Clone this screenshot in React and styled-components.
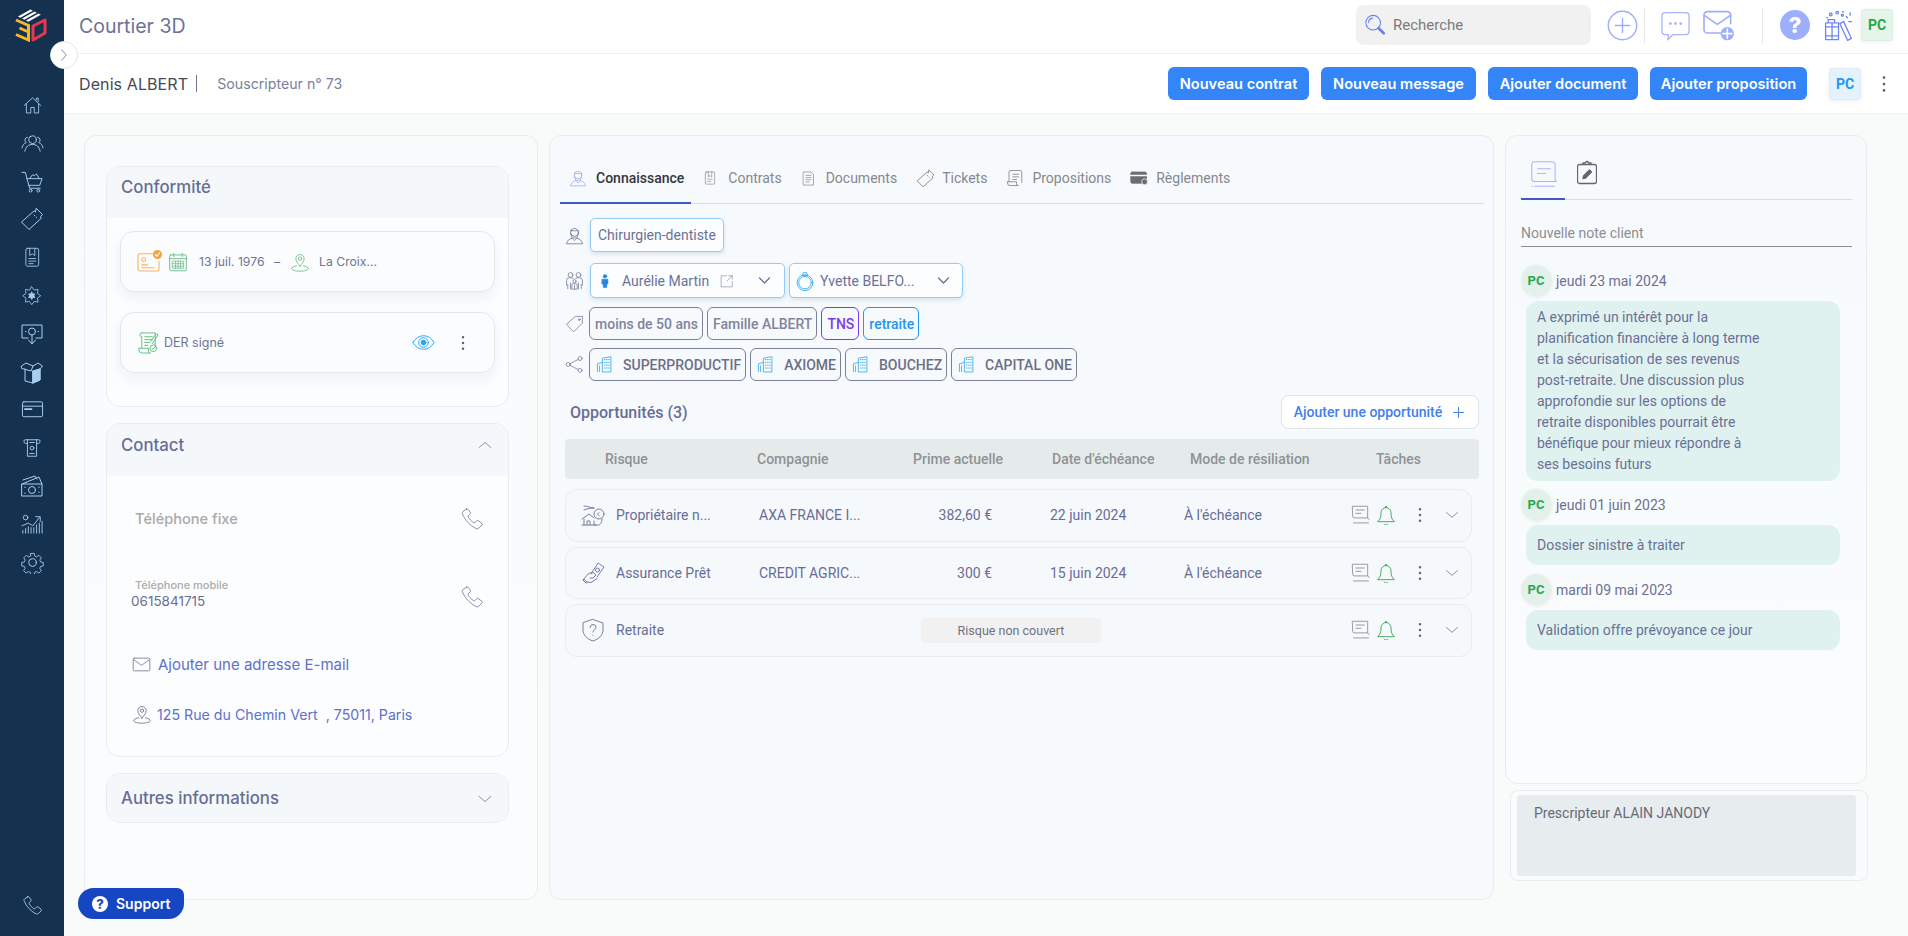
import React from 'react';
import styled, { createGlobalStyle } from 'styled-components';

const POP = `Inter, "Noto Sans", sans-serif`;
const ROB = `Roboto, "Liberation Sans", sans-serif`;
const INK = '#6b7096';

const Global = createGlobalStyle`
  html, body { margin: 0; padding: 0; height: 100%; background: #f9fafa; }
  #root { height: 936px; }
  * { box-sizing: border-box; }
`;

/* ---------- icon primitive ---------- */
const Ico = styled.svg.attrs(p => ({
  viewBox: p.$vb || '0 0 24 24', fill: 'none', stroke: 'currentColor', strokeLinecap: 'round', strokeLinejoin: 'round',
}))`
  width: ${p => p.$s || 20}px;
  height: ${p => p.$h || p.$s || 20}px;
  flex: none;
  color: ${p => p.$c || INK};
  stroke-width: ${p => p.$w ?? 1};
  margin-left: ${p => p.$ml || 0}px;
  margin-right: ${p => p.$mr || 0}px;
  margin-top: ${p => p.$mt || 0}px;
`;

const star = (n, R, r) => Array.from({ length: n * 2 }, (_, i) => {
  const a = (Math.PI * i) / n - Math.PI / 2;
  const d = i % 2 ? r : R;
  return `${(12 + d * Math.cos(a)).toFixed(2)},${(12 + d * Math.sin(a)).toFixed(2)}`;
}).join(' ');

const I = {
  home: <><path d="M2.500 12 12 3.200l9.500 8.800" /><path d="M5 10v10.500h5v-6.200h4v6.200h5V10" /><path d="M16.500 5.500V3.500h2v4" /></>,
  users: <><circle cx="12" cy="8" r="4" /><path d="M4 20c1-5 4-7 8-7s7 2 8 7" /><path d="M6.500 5.500a3 3 0 0 0-1 5.500C3 12 1.500 14 1 16.500" /><path d="M17.500 5.500a3 3 0 0 1 1 5.500c2.500 1 4 3 4.500 5.500" /></>,
  cart: <><path d="M1 2.500h3.500L9 19h11" /><path d="M6 9h16l-2.500 7H8" /><path d="M9 9l3-4 2 1 2-2 3 5" /><circle cx="10" cy="21.500" r="1.500" /><circle cx="18" cy="21.500" r="1.500" /></>,
  ticket: <><path d="M16.500 1.500 22.500 7.500l-2.300 2.300 1.300 1.200L9 22.500 1.500 15 14.200 3.800l1 1z" /><path d="M14 8l.6.6M16 10l.6.6" /></>,
  contract: <><rect x="4.500" y="1.500" width="15" height="21" rx="2" /><path d="M9 1.500V10l3-2 3 2V1.500" /><path d="M8 13.500h8M8 16.500h8M8 19.500h5" /></>,
  burst: <><polygon points={star(8, 11, 7.6)} /><polygon points={star(6, 4.500, 2.600)} fill="currentColor" /></>,
  moneyDown: <><path d="M8 16H2V3h20v13h-6" /><circle cx="12" cy="9.500" r="3.500" /><path d="M5.500 9.500h.5M18 9.500h.5" /><path d="M12 13v8M8.500 18l3.500 4 3.500-4" /></>,
  box: <><path d="M5 9v12l8 2 7-3V9" /><path d="M13 11v12" /><path d="M13 23l7-3V9l-7 2z" fill="currentColor" /><path d="M1.500 6 6 3l7 3-2 5-9-2.500z" /><path d="M13 6l5-3 4.500 3-2.500 3-7 2" /></>,
  card: <><rect x="1.500" y="4" width="21" height="15.500" rx="1.500" /><path d="M1.500 8.500h21" /><path d="M4 11.500h7" strokeWidth="1.800" /></>,
  atm: <><path d="M7 7H5C3 7 2.500 3 4.500 3h15c2 0 1.500 4-.5 4h-2" /><path d="M7 3v18h10V3" /><circle cx="12" cy="12" r="2" /><path d="M9.500 18h5M9.500 6h5" /></>,
  cash: <><path d="M2 10 19 3l3 7" /><path d="M3 6l12-4 2 3" /><rect x="2" y="10" width="20" height="12" /><circle cx="12" cy="16" r="3.500" /><path d="M5 13v.5M19 18v.5M5 19v.5M19 13v.5" /></>,
  chart: <><circle cx="5" cy="5" r="2.500" /><path d="M1 14l7-3 5 3 7-9M16 4h5v5" /><path d="M2 22v-3M5 22v-5M8 22v-7M11 22v-6M14 22v-6M17 22v-9M20 22v-11M23 22v-13" /></>,
  gear: <><path d="M10 1.500h4l.6 3.100 2.200.9 2.600-1.800 2.900 2.900-1.800 2.600.9 2.200 3.100.6v4l-3.100.6-.9 2.200 1.800 2.600-2.900 2.900-2.600-1.800-2.200.9-.6 3.100h-4l-.6-3.100-2.200-.9-2.600 1.800-2.900-2.900 1.800-2.600-.9-2.200-3.100-.6v-4l3.100-.6.9-2.200L1.900 6.600l2.900-2.900 2.600 1.800 2.200-.9z" transform="translate(1.200 1.200) scale(.9)" /><circle cx="12" cy="12" r="4" /></>,
  phone: <><path d="M6.500 2 3 4.500C2.300 5 2 6 2.500 7c2.500 6 7.500 11.500 13.500 14.500 1 .5 2 .3 2.800-.4L22 18c.5-.5.4-1.200-.1-1.600l-3.600-2.800c-.5-.4-1.200-.3-1.600.1L15 15.500c-.4.400-1 .4-1.500.1-1.800-1.100-4.200-3.600-5.300-5.500-.3-.5-.2-1.100.2-1.500l1.800-1.700c.4-.4.400-1 .1-1.500L8 2.300C7.600 1.800 7 1.700 6.500 2z" /></>,
  search: <><circle cx="10" cy="9.500" r="8" /><path d="M5 9.500A5 5 0 0 1 9.500 4.500" /><path d="M16 15.500l5.500 5.500" strokeWidth="3" /></>,
  plusCircle: <><circle cx="12" cy="12" r="11" /><path d="M12 6.500v11M6.500 12h11" /></>,
  chat: <><path d="M4 2h16a2.500 2.500 0 0 1 2.500 2.500v12A2.500 2.500 0 0 1 20 19H10l-4 4 .5-4H4a2.500 2.500 0 0 1-2.500-2.500v-12A2.500 2.500 0 0 1 4 2z" /><path d="M8 10.500h.01M12 10.500h.01M16 10.500h.01" strokeWidth="2.200" /></>,
  mailPlus: <><path d="M14 18H4a2.500 2.500 0 0 1-2.500-2.500v-11A2.500 2.500 0 0 1 4 2h15a2.500 2.500 0 0 1 2.500 2.500V11" /><path d="M2 5l9.500 6.500L21 5" /><circle cx="19" cy="18.500" r="5" fill="currentColor" stroke="none" /><path d="M19 15v7M15.500 18.500h7" stroke="#fff" /></>,
  books: <><path d="M2 10h5v13H2zM7 10h5v13H7zM2 13h10M2 20h10" /><path d="M13 10.500l3-1.500 6 13-3 1.500z" /><path d="M4 9.500V7.500h5v2" /><circle cx="6" cy="3.500" r="1" /><circle cx="11" cy="2" r="1" /><circle cx="15" cy="4" r=".8" /><path d="M18 5l1 1M21 2v2M20 9h2M15 1.500h1M3 6h.5" /></>,
  dots: <><path d="M12 5h.01M12 12h.01M12 19h.01" strokeWidth="3" /></>,
  eye: <><path d="M1 12c2.500-4.500 6.500-7 11-7s8.500 2.500 11 7c-2.500 4.500-6.500 7-11 7s-8.500-2.500-11-7z" /><circle cx="12" cy="12" r="5" /><circle cx="12" cy="12" r="2.500" fill="currentColor" /></>,
  idCard: <><path d="M17 4H3a2 2 0 0 0-2 2v14a2 2 0 0 0 2 2h18a2 2 0 0 0 2-2v-8" /><circle cx="7" cy="10" r="2" /><path d="M5 15.500h6M5 18.500h13" /></>,
  calendar: <><rect x="2" y="3.500" width="20" height="19" rx="1.500" /><path d="M2 8h20M7 1.500v4M17 1.500v4" /><path d="M5.500 11h13v8.500h-13zM5.500 14h13M5.500 17h13M9 11v8.500M12 11v8.500M15 11v8.500" strokeWidth=".8" /></>,
  pin: <><path d="M12 17c-2.500-3-5-6-5-9a5 5 0 0 1 10 0c0 3-2.500 6-5 9z" /><circle cx="12" cy="8" r="2" /><path d="M8 16.500c-3.500.6-6 2-6 3.500 0 1.700 4.500 3 10 3s10-1.300 10-3c0-1.500-2.500-2.900-6-3.500" /></>,
  scroll: <><path d="M5 2h14v14M5 2a2 2 0 0 0 0 4v12" /><path d="M8 6h8M8 9h8M8 12h5M8 15h3" /><path d="M2 18h10v3a2 2 0 0 0 2 2H5a3 3 0 0 1-3-3z" /><circle cx="17" cy="18" r="3.500" /><path d="M15.500 18l1 1 2-2M14 11l6-8 2 1-6 9" /></>,
  mail: <><rect x="1.500" y="4" width="21" height="16" rx="1.500" /><path d="M2 6l10 7 10-7" /></>,
  chevDown: <path d="M4 8.500l8 7 8-7" />,
  chevUp: <path d="M4 15.500l8-7 8 7" />,
  chevRight: <path d="M8 3l8 9-8 9" />,
  chevBold: <path d="M5 8.500l7 7 7-7" />,
  agent: <><circle cx="12" cy="8" r="5" /><path d="M7 6c3 0 7 0 10 0M7 9l2 6h6l2-6" /><path d="M2 22c.5-3.500 3-5.500 7-6.500l3 3 3-3c4 1 6.500 3 7 6.500z" /></>,
  contrats: <><rect x="4" y="1.500" width="16" height="21" rx="2" /><path d="M9 1.500V10l3-2 3 2V1.500M8 14h8M8 18h5" /></>,
  doc: <><path d="M4 1.500h12l4 4v17H4z" /><path d="M8 7h8M8 10.500h8M8 14h8M8 17.500h5" /></>,
  propos: <><path d="M6 2h13a2 2 0 0 1 2 2v14" /><path d="M6 2a2 2 0 0 0-2 2v13" /><path d="M9 7h8M9 10.500h8M9 14h5" /><path d="M2 17h12v2.500a2.500 2.500 0 0 0 2.500 2.500H5a3 3 0 0 1-3-3z" /></>,
  regle: <><rect x="1" y="4" width="21" height="15" rx="2" fill="currentColor" /><path d="M1 8.500h21" stroke="#f6f9fb" strokeWidth="2" /><circle cx="19.500" cy="17" r="4" fill="currentColor" stroke="#f6f9fb" /></>,
  family: <><circle cx="7" cy="5" r="3" /><circle cx="17" cy="5" r="3" /><circle cx="12" cy="13" r="2" /><path d="M2 18v-6a3.500 3.500 0 0 1 3.500-3.500h3A3.500 3.500 0 0 1 11 10M22 18v-6a3.500 3.500 0 0 0-3.500-3.500h-3A3.500 3.500 0 0 0 13 10M3.500 22.500V17M7 22.500V15M20.500 22.500V17M17 22.500V15M8.500 22.500V18a2 2 0 0 1 2-2h3a2 2 0 0 1 2 2v4.500zM12 18v4.500" /></>,
  tag: <><path d="M13.500 3H22v8.500L11 22.500 2 13.500z" /><circle cx="18" cy="7" r="1.200" /></>,
  share: <><circle cx="4" cy="12" r="2.500" /><circle cx="19" cy="4.500" r="2.500" /><circle cx="19" cy="19.500" r="2.500" /><path d="M6.300 11 16.700 5.600M6.300 13l10.400 5.400" /></>,
  building: <><path d="M9 22V3l12-2v21z" /><path d="M2 22v-11l7-2" /><path d="M12 5h.6M15 5h.6M18 5h.6M12 9h.6M15 9h.6M18 9h.6M12 13h.6M15 13h.6M18 13h.6M12 17h.6M15 17h.6M18 17h.6" strokeWidth="1.400" /><path d="M5 14v8" /></>,
  external: <><path d="M11 3H2v19h19v-9" /><path d="M21 3 12 12M15 3h6v6" /></>,
  person: <><circle cx="12" cy="4" r="3" fill="currentColor" /><path d="M7 9h10v8h-2v6h-6v-6H7z" fill="currentColor" /></>,
  ring: <><circle cx="12" cy="14" r="9.500" /><circle cx="12" cy="14" r="7.500" /><path d="M9 5l1-3h4l1 3z" /></>,
  plus: <path d="M12 4v16M4 12h16" />,
  house: <><circle cx="18" cy="11" r="5" /><path d="M18 9.500l-1.500 1.500 1.500 1.500" /><path d="M1 22h14M3 22v-6M13 22v-4M1 16l7-5 5 4M6 22v-4h3v4" /><path d="M3 3c4 0 6 2 10 2M3 7c3-1 5-2 10-2" /><path d="M14 22h3c2 0 4-2 4-6" /></>,
  handCash: <><path d="M10 13 17 2l6 4-7 10" /><circle cx="16.500" cy="9" r="2" /><path d="M2 19l5-6c2-1.500 4-1.500 6-1l2 2-3 3h-3M5 22l-3-3 1-1 3 3z" /><path d="M6 21l4 .5 6-4" /></>,
  shieldQ: <><path d="M12 1.500l10 3.500v7c0 5-4 9-10 11C6 21 2 17 2 12V5z" /><path d="M9 9.500a3 3 0 0 1 6 0c0 2-3 2.500-3 4.500M12 17.500h.01" /></>,
  comment: <><path d="M2 1.500h18v14H4a2 2 0 0 1-2-2zM20 15.500l2 2" /><path d="M6 6h10M6 10h6M3 21.500h18" /></>,
  bell: <><path d="M12 3a6 6 0 0 1 6 6c0 6 1 8 4 11H2c3-3 4-5 4-11a6 6 0 0 1 6-6z" /><path d="M10 23a2.200 2.200 0 0 0 4 0M11 2.500a1 1 0 0 1 2 0" /></>,
  note: <><path d="M4 1.500h15a2.500 2.500 0 0 1 2.500 2.500v13l1 1.500H4a2.500 2.500 0 0 1-2.500-2.500V4A2.500 2.500 0 0 1 4 1.500z" /><path d="M6.500 7.500h11M6.500 11.500h7M4 22.500h17M1.500 22.500h.5" /></>,
  clip: <><rect x="2.500" y="4" width="19" height="19" rx="2" /><path d="M8 4V2.500h2.500a1.500 1.500 0 0 1 3 0H16V4" /><path d="M8 18l2.500-.5 6-6-2-2-6 6z" fill="currentColor" /></>,
  check: <path d="M2.500 5.200 4.200 7 7.500 3.200" />,
};

/* ---------- shell ---------- */
const Page = styled.div`
  display: flex; height: 936px; overflow: hidden; position: relative;
  font-family: ${POP}; color: ${INK}; background: #f9fafa;
`;
const Side = styled.aside`
  width: 64px; flex: none; background: #14324f; display: flex; flex-direction: column; align-items: center;
  padding-bottom: 20px;
`;
const Logo = styled.svg`width: 32px; height: 36px; margin-top: 7px; flex: none; margin-left: -2px;`;
const SideNav = styled.nav`
  display: flex; flex-direction: column; align-items: center; margin-top: 43px; flex: 1;
`;
const SideItem = styled.div`
  height: 38.100px; display: flex; align-items: center; justify-content: center;
`;
const Toggle = styled.button`
  position: absolute; left: 50px; top: 41px; width: 28px; height: 28px; border-radius: 50%;
  background: #fff; border: 1px solid #e4e6ea; padding: 0; display: flex; align-items: center; justify-content: center;
`;
const Main = styled.div`flex: 1; min-width: 0; display: flex; flex-direction: column;`;
const TopBar = styled.header`
  height: 54px; flex: none; background: #fff; border-bottom: 1px solid #eef0f2; display: flex; align-items: center;
  padding: 0 15px 3px 15px;
`;
const AppTitle = styled.div`font-size: 19.500px; font-weight: 400; color: #69739a; margin-top: 1px;`;
const SearchBox = styled.div`
  margin-left: auto; margin-right: -1px; width: 235px; height: 40px; border-radius: 8px; background: #f1f1f1; display: flex; align-items: center; gap: 7px;
  padding-left: 8px; font-family: ${ROB}; font-size: 15px; color: #7b7b7b;
`;
const TopDivider = styled.span`width: 1px; height: 35px; background: #e6e7ea; flex: none;`;
const IconSlot = styled.div`display: flex; margin-left: ${p => p.$ml || 0}px; flex: none; align-items: center;`;
const Initials = styled.div`
  width: 32px; height: 32px; border-radius: 3px; flex: none; display: flex; align-items: center; justify-content: center;
  font-family: ${ROB}; font-weight: 700; font-size: 14px;
  background: ${p => (p.$blue ? '#e3f2fd' : '#e6f4ea')}; color: ${p => (p.$blue ? '#2196f3' : '#28a745')};
  border: 1px solid ${p => (p.$blue ? '#dcebf7' : '#dfeee4')}; box-shadow: 0 2px 5px rgba(0,0,0,.05);
  margin-left: ${p => p.$ml || 0}px;
`;
const ToolBar = styled.div`
  height: 60px; flex: none; background: #fff; border-bottom: 1px solid #f0f1f2; display: flex; align-items: center;
  padding: 0 13px 0 15px;
`;
const ClientName = styled.div`font-size: 16px; color: #444a55; font-weight: 400; letter-spacing: .1px;`;
const Bar = styled.span`width: 1px; height: 17px; background: #70769a; margin: 0 20px 0 8px;`;
const ClientRole = styled.div`font-size: 14.200px; color: #79809f;`;
const ActionGroup = styled.div`margin-left: auto; display: flex; align-items: center; gap: 12px; margin-right: 1px;`;
const ActionBtn = styled.button`
  height: 33px; border: 0; border-radius: 6px; background: #3385f8; color: #fff; font-family: ${POP}; font-weight: 600; font-size: 14.600px;
  width: ${p => p.$w}px; padding: 0; white-space: nowrap;
`;
const DotBtn = styled.div`display: flex; margin-left: 11px;`;

const Content = styled.main`
  flex: 1; min-height: 0; display: grid; grid-template-columns: 454px 945px 362px; gap: 11px;
  padding: 21px 0 36px 20px;
`;
const Panel = styled.section`
  border: 1px solid #e9edf0; border-radius: 12px; background: #f7fafc; min-height: 0;
`;

/* ---------- left column ---------- */
const LeftPanel = styled(Panel)`
  padding: 30px 28px 0 21px; display: flex; flex-direction: column; gap: 16px;
  background: linear-gradient(#f8fafc, #fafcfd);
`;
const Section = styled.div`
  border: 1px solid #e9edf0; border-radius: 14px; background: #fcfdfe; overflow: hidden; flex: none;
  height: ${p => p.$h}px;
`;
const SectionHead = styled.div`
  height: ${p => p.$h || 51}px; background: #f5f8fb; padding: ${p => p.$pt || 10}px 14px 0 14px; display: flex; justify-content: space-between; align-items: flex-start;
  font-size: 16.800px; font-weight: 500; color: #666e95;
`;
const SectionBody = styled.div`padding: 13px 13px; display: flex; flex-direction: column; gap: 20px;`;
const InfoCard = styled.div`
  height: 61px; border: 1px solid #e4e6ea; border-radius: 14px; background: #fbfcfe; box-shadow: 0 6px 14px rgba(30,40,60,.06);
  display: flex; align-items: center; padding: 0 16px; font-size: 12.200px; color: #6e7497;
`;
const InfoText = styled.span`margin-left: ${p => p.$ml || 0}px; white-space: nowrap; font-size: ${p => p.$fs || 12.2}px;`;
const BadgeWrap = styled.span`position: relative; display: flex; flex: none;`;
const CheckDot = styled.span`
  position: absolute; right: -2px; top: 0; width: 9px; height: 9px; border-radius: 50%; background: #f9a03f; color: #fff;
  display: flex; align-items: center; justify-content: center;
`;
const Push = styled.span`margin-left: auto;`;
const ContactBody = styled.div`padding: 23px 24px 0 25px; display: flex; flex-direction: column;`;
const PhoneRow = styled.div`
  height: 40px; margin-bottom: 34px; display: flex; align-items: center; justify-content: space-between;
`;
const PhoneFix = styled.div`font-size: 14.600px; font-weight: 500; color: #a9a9a9; margin-left: 3px;`;
const PhoneStack = styled.div`display: flex; flex-direction: column; line-height: 16px;`;
const PhoneLabel = styled.div`font-size: 11px; color: #ababab; font-weight: 500; margin-left: 3px;`;
const PhoneValue = styled.div`font-size: 13.500px; color: #686e92; margin-left: -1px;`;
const LinkRow = styled.div`
  height: 24px; margin-top: 5px; display: flex; align-items: center; gap: 7px; font-size: ${p => p.$fs}px; color: #6070cc;
  & + & { margin-top: 26px; }
`;

/* ---------- centre column ---------- */
const CenterPanel = styled(Panel)`padding: 0 9px 0 10px; display: flex; flex-direction: column;`;
const Tabs = styled.div`
  margin-top: 22px; height: 46px; display: flex; align-items: stretch; border-bottom: 1px solid #d8dde3; flex: none;
`;
const Tab = styled.div`
  display: flex; align-items: center; gap: ${p => p.$gap}px; padding: 0 7px 5px 9px; margin-right: 3px;
  font-family: ${ROB}; font-size: 14px; font-weight: ${p => (p.$on ? 500 : 400)}; color: ${p => (p.$on ? '#33363f' : '#85888f')};
  position: relative;
  ${p => p.$on && `&::after { content: ''; position: absolute; left: 0; right: 0; bottom: -1px; height: 2px; background: #4558bd; }`}
`;
const ChipRow = styled.div`
  display: flex; align-items: center; gap: ${p => p.$gap ?? 4}px; margin-top: ${p => p.$mt}px; padding-left: ${p => p.$pl || 5}px; flex: none;
`;
const ChipIcon = styled.div`width: ${p => p.$w || 25}px; display: flex; flex: none;`;
const SoftChip = styled.div`
  height: ${p => p.$h || 34}px; border: 1px solid #93cdf5; border-radius: 5px; background: #fbfdff; box-shadow: 0 2px 4px rgba(90,130,170,.2);
  display: flex; align-items: center; font-family: ${ROB}; font-size: 14px; color: #6c7298; padding: 0 7px 0 ${p => p.$pl || 7}px;
  width: ${p => (p.$w ? `${p.$w}px` : 'auto')}; margin-left: ${p => p.$ml || 0}px; white-space: nowrap; flex: none;
`;
const ChipName = styled.span`margin-left: ${p => p.$ml}px;`;
const LineChip = styled.div`
  height: 33px; border: 1px solid ${p => p.$c || '#7c8098'}; border-radius: 6px; display: flex; align-items: center; padding: 0 4px 0 ${p => p.$pl || 5}px;
  font-family: ${ROB}; font-size: 14px; font-weight: 500; color: ${p => p.$t || '#80849c'}; white-space: nowrap; flex: none;
`;
const CompanyName = styled.span`margin-left: 10px; color: #6b6f86; font-weight: 500; font-size: 14px;`;
const OppHead = styled.div`
  display: flex; align-items: center; justify-content: space-between; margin-top: 14px; padding: 0 5px 0 10px; height: 34px; flex: none;
`;
const OppTitle = styled.div`font-family: ${ROB}; font-weight: 500; font-size: 16px; color: #666d9a;`;
const AddBtn = styled.button`
  width: 198px; height: 34px; background: #fff; border: 1px solid #e0e3e7; border-radius: 8px; color: #3f7ff0;
  font-family: ${ROB}; font-size: 14px; font-weight: 500; display: flex; align-items: center; justify-content: center; gap: 9px; padding: 0;
`;
const TableHead = styled.div`
  margin: 10px 5px 0 5px; height: 40px; flex: none; background: #e4ebea; border-radius: 4px; display: grid;
  grid-template-columns: 152px 156px 139px 138px 186px 1fr; padding-left: 40px; align-items: center;
  font-family: ${ROB}; font-weight: 500; font-size: 14px; color: #8f9296; white-space: nowrap;
`;
const Rows = styled.div`margin: 10px 12px 0 5px; display: flex; flex-direction: column; gap: 5px;`;
const Row = styled.div`
  height: 52.500px; border: 1px solid #e9edf0; border-radius: 12px; background: #f6f9fc; display: grid;
  grid-template-columns: 178px 140px 93px 58px 134px 167px 1fr; padding-left: 15px; align-items: center;
  font-family: ${ROB}; font-size: 14px; color: #676d98; white-space: nowrap;
`;
const RiskCell = styled.div`display: flex; align-items: center; gap: 11px;`;
const Prime = styled.div`text-align: right; grid-column: 3;`;
const DateCell = styled.div`grid-column: 5;`;
const Uncovered = styled.div`
  grid-column: 3 / 6; margin-left: 22px; width: 180px; height: 25px; background: #f1f1f1; border-radius: 4px; display: flex;
  align-items: center; justify-content: center; font-size: 12.500px; color: #6f7280;
`;
const RowActions = styled.div`grid-column: 7; display: flex; align-items: center;`;
const ActionSpot = styled.div`display: flex; margin-left: ${p => p.$ml || 0}px;`;

/* ---------- right column ---------- */
const RightColumn = styled.div`display: flex; flex-direction: column; gap: 6px; min-height: 0;`;
const RightPanel = styled(Panel)`
  height: 649px; flex: none; padding: 0 14px 0 15px; background: linear-gradient(#f7fafc, #fafcfd);
`;
const NoteTabs = styled.div`
  height: 64px; border-bottom: 1px solid #d8dde3; display: flex; align-items: flex-end;
`;
const NoteTab = styled.div`
  width: ${p => p.$w}px; height: 39px; display: flex; align-items: flex-start; padding-left: ${p => p.$pl}px; position: relative;
  ${p => p.$on && `&::after { content: ''; position: absolute; left: 0; right: 0; bottom: -1px; height: 2px; background: #4558bd; }`}
`;
const NoteInput = styled.div`
  margin-top: 25px; height: 22px; border-bottom: 1px solid #8a8d91; font-family: ${ROB}; font-size: 14px; color: #8b8e92; line-height: 17px;
`;
const NoteHead = styled.div`
  display: flex; align-items: center; gap: 5px; margin-top: ${p => p.$mt}px; font-family: ${ROB}; font-size: 14px; color: #6b7096;
`;
const NoteAvatar = styled.div`
  width: 30px; height: 31px; border-radius: 50%; background: #e4f1ea; color: #2aa84f; font-family: ${ROB}; font-weight: 700; font-size: 13px;
  display: flex; align-items: center; justify-content: center; box-shadow: 1px 1px 4px rgba(0,0,0,.08);
`;
const Bubble = styled.div`
  margin: 5px 0 0 5px; width: 314px; min-height: 40px; background: #dff2ef; border-radius: 12px; padding: 6px 11px; display: flex; align-items: center;
  font-family: ${ROB}; font-size: 14px; line-height: 21px; color: #6b7096;
`;
const Prescriber = styled.div`
  height: 91px; width: 358px; margin-left: 5px; border: 1px solid #e9edf0; border-radius: 8px; padding: 4px 11px 4px 6px; background: #f9fbfc; flex: none;
`;
const PrescriberBox = styled.div`
  height: 81px; background: #e7ecee; border-radius: 3px; padding: 10px 17px; font-family: ${ROB}; font-size: 14px; color: #666b78;
`;
const Support = styled.div`
  position: absolute; left: 78px; top: 888px; width: 106px; height: 31px; background: #1547c2; border-radius: 16px 7px 16px 16px;
  display: flex; align-items: center; gap: 8px; padding-left: 14px; color: #fff; font-weight: 600; font-size: 14px;
`;
const SupportMark = styled.span`
  width: 16px; height: 16px; border-radius: 50%; background: #fff; color: #1547c2; font-size: 13px; font-weight: 800; display: flex; align-items: center; justify-content: center;
`;
const HelpDisc = styled.div`
  width: 30px; height: 30px; border-radius: 50%; background: #9daefb; color: #fff; font-weight: 800; font-size: 22px;
  display: flex; align-items: center; justify-content: center;
`;

const SIDE = [['home', 21], ['users', 23], ['cart', 23], ['ticket', 24], ['contract', 20.5], ['burst', 19.5], ['moneyDown', 24], ['box', 24], ['card', 23], ['atm', 22], ['cash', 24], ['chart', 22], ['gear', 23]];
const TOP_BTNS = [['Nouveau contrat', 141], ['Nouveau message', 155], ['Ajouter document', 150], ['Ajouter proposition', 157]];
const CENTER_TABS = [
  ['agent', 'Connaissance', 18, '#9aa8f4', 9, true], ['contrats', 'Contrats', 14, '#74777e', 11], ['doc', 'Documents', 15, '#74777e', 10],
  ['ticket', 'Tickets', 19, '#74777e', 7], ['propos', 'Propositions', 18, '#74777e', 8], ['regle', 'Règlements', 18, '#6a6d75', 8],
];
const COMPANIES = ['SUPERPRODUCTIF', 'AXIOME', 'BOUCHEZ', 'CAPITAL ONE'];
const OPPS = [
  { icon: 'house', name: 'Propriétaire n...', co: 'AXA FRANCE I...', prime: '382,60 €', date: '22 juin 2024', mode: "À l'échéance" },
  { icon: 'handCash', name: 'Assurance Prêt', co: 'CREDIT AGRIC...', prime: '300 €', date: '15 juin 2024', mode: "À l'échéance" },
  { icon: 'shieldQ', name: 'Retraite', uncovered: true },
];

export default function App() {
  return (
    <Page>
      <Global />
      <Side>
        <Logo viewBox="0 0 32 36" fill="none">
          <g fill="#fff">
            <path d="M3 9.500 15.500 2.500l2.300 1.200L5.300 10.700z" />
            <path d="M7 11.500 19.500 4.500l2.300 1.200L9.300 12.700z" />
            <path d="M11 13.500 23.500 6.500l2.300 1.200L13.300 14.700z" />
          </g>
          <path stroke="#f9b52b" strokeWidth="3" d="M1 13 13.500 18.500V33L1 27.500M4.500 21l9 4" />
          <path stroke="#e8384f" strokeWidth="3" strokeLinejoin="round" d="M18 19 30 13V26L18 33z" />
        </Logo>
        <SideNav>
          {SIDE.map(([k, s]) => (
            <SideItem key={k}>
              <Ico $s={s} $c="#a9cdf0" $w={1}>{I[k]}</Ico>
            </SideItem>
          ))}
        </SideNav>
        <Ico $s={21} $c="#a9cdf0" $w={1}>{I.phone}</Ico>
      </Side>
      <Toggle aria-label="ouvrir"><Ico $s={14} $c="#5a6690" $w={1.3}>{I.chevRight}</Ico></Toggle>

      <Main>
        <TopBar>
          <AppTitle>Courtier 3D</AppTitle>
          <SearchBox><Ico $s={22} $c="#6c80f0" $w={1.1}>{I.search}</Ico>Recherche</SearchBox>
          <IconSlot $ml={17}><Ico $s={31} $c="#9daefb" $w={1.1}>{I.plusCircle}</Ico></IconSlot>
          <IconSlot $ml={6}><TopDivider /></IconSlot>
          <IconSlot $ml={15}><Ico $s={31} $c="#a6b4fb" $w={1}>{I.chat}</Ico></IconSlot>
          <IconSlot $ml={11}><Ico $s={32} $c="#9daefb" $w={1.2}>{I.mailPlus}</Ico></IconSlot>
          <IconSlot $ml={28}><TopDivider /></IconSlot>
          <IconSlot $ml={17}><HelpDisc>?</HelpDisc></IconSlot>
          <IconSlot $ml={13}><Ico $s={31} $c="#6f84f4" $w={1}>{I.books}</Ico></IconSlot>
          <Initials $ml={7}>PC</Initials>
        </TopBar>

        <ToolBar>
          <ClientName>Denis ALBERT</ClientName>
          <Bar />
          <ClientRole>Souscripteur n° 73</ClientRole>
          <ActionGroup>
            {TOP_BTNS.map(([t, w]) => <ActionBtn key={t} $w={w}>{t}</ActionBtn>)}
            <Initials $blue $ml={10}>PC</Initials>
          </ActionGroup>
          <DotBtn><Ico $s={22} $c="#5f6570" $w={1}>{I.dots}</Ico></DotBtn>
        </ToolBar>

        <Content>
          <LeftPanel>
            <Section $h={241}>
              <SectionHead>Conformité</SectionHead>
              <SectionBody>
                <InfoCard>
                  <BadgeWrap>
                    <Ico $s={23} $c="#f9b25c" $w={1.1}>{I.idCard}</Ico>
                    <CheckDot><Ico $s={9} $c="#fff" $w={1.2} $vb="0 0 10 10">{I.check}</Ico></CheckDot>
                  </BadgeWrap>
                  <Ico $s={20} $c="#5cb77c" $w={1} $ml={8}>{I.calendar}</Ico>
                  <InfoText $ml={11}>13 juil. 1976</InfoText>
                  <InfoText $ml={9.5}>–</InfoText>
                  <Ico $s={20} $c="#66bb82" $w={1} $ml={10}>{I.pin}</Ico>
                  <InfoText $ml={9}>La Croix...</InfoText>
                </InfoCard>
                <InfoCard>
                  <Ico $s={23} $c="#63bd7f" $w={1}>{I.scroll}</Ico>
                  <InfoText $ml={4} $fs={12.5}>DER signé</InfoText>
                  <Push />
                  <Ico $s={23} $c="#2aa3ee" $w={1}>{I.eye}</Ico>
                  <Ico $s={20} $c="#5f6570" $w={1} $ml={18.5} $mr={5}>{I.dots}</Ico>
                </InfoCard>
              </SectionBody>
            </Section>
            <Section $h={334}>
              <SectionHead $h={52} $pt={11}>
                Contact
                <Ico $s={18} $c="#6b7096" $w={1} $mt={1}>{I.chevUp}</Ico>
              </SectionHead>
              <ContactBody>
                <PhoneRow>
                  <PhoneFix>Téléphone fixe</PhoneFix>
                  <Ico $s={24} $w={.8}>{I.phone}</Ico>
                </PhoneRow>
                <PhoneRow>
                  <PhoneStack>
                    <PhoneLabel>Téléphone mobile</PhoneLabel>
                    <PhoneValue>0615841715</PhoneValue>
                  </PhoneStack>
                  <Ico $s={24} $w={.8} $mt={8}>{I.phone}</Ico>
                </PhoneRow>
                <LinkRow $fs={15}><Ico $s={19} $w={1}>{I.mail}</Ico>Ajouter une adresse E-mail</LinkRow>
                <LinkRow $fs={14.2}><Ico $s={20} $w={1} $mr={-2}>{I.pin}</Ico>125 Rue du Chemin Vert &nbsp;, 75011, Paris</LinkRow>
              </ContactBody>
            </Section>
            <Section $h={50}>
              <SectionHead $h={50} $pt={14}>
                Autres informations
                <Ico $s={18} $c="#6b7096" $w={1} $mt={2}>{I.chevDown}</Ico>
              </SectionHead>
            </Section>
          </LeftPanel>

          <CenterPanel>
            <Tabs>
              {CENTER_TABS.map(([ic, t, s, c, gap, on]) => (
                <Tab key={t} $on={on} $gap={gap}>
                  <Ico $s={s} $c={c} $w={1}>{I[ic]}</Ico>{t}
                </Tab>
              ))}
            </Tabs>
            <ChipRow $mt={14} $gap={0}>
              <ChipIcon><Ico $s={19} $w={1}>{I.agent}</Ico></ChipIcon>
              <SoftChip>Chirurgien-dentiste</SoftChip>
            </ChipRow>
            <ChipRow $mt={11} $gap={0}>
              <ChipIcon><Ico $s={19} $w={.9}>{I.family}</Ico></ChipIcon>
              <SoftChip $h={35} $w={195}>
                <Ico $s={14} $c="#1e88e5">{I.person}</Ico>
                <ChipName $ml={10}>Aurélie Martin</ChipName>
                <Ico $s={14} $w={.9} $ml={11}>{I.external}</Ico>
                <Ico $s={17} $w={1.8} $ml={22}>{I.chevBold}</Ico>
              </SoftChip>
              <SoftChip $h={35} $w={174} $ml={4} $pl={5}>
                <Ico $s={20} $c="#2aa3ee" $w={1}>{I.ring}</Ico>
                <ChipName $ml={5}>Yvette BELFO...</ChipName>
                <Ico $s={17} $w={1.8} $ml={21}>{I.chevBold}</Ico>
              </SoftChip>
            </ChipRow>
            <ChipRow $mt={9}>
              <ChipIcon $w={20}><Ico $s={19} $w={.9}>{I.tag}</Ico></ChipIcon>
              <LineChip>moins de 50 ans</LineChip>
              <LineChip>Famille ALBERT</LineChip>
              <LineChip $c="#7c3aed" $t="#7c3aed">TNS</LineChip>
              <LineChip $c="#2196f3" $t="#2196f3">retraite</LineChip>
            </ChipRow>
            <ChipRow $mt={8}>
              <ChipIcon $w={20}><Ico $s={19} $w={.9}>{I.share}</Ico></ChipIcon>
              {COMPANIES.map(c => (
                <LineChip key={c} $pl={6}><Ico $s={17} $c="#2aa3ee" $w={1.1}>{I.building}</Ico><CompanyName>{c}</CompanyName></LineChip>
              ))}
            </ChipRow>
            <OppHead>
              <OppTitle>Opportunités (3)</OppTitle>
              <AddBtn>Ajouter une opportunité<Ico $s={15} $c="#3f7ff0" $w={1.6}>{I.plus}</Ico></AddBtn>
            </OppHead>
            <TableHead>
              <span>Risque</span><span>Compagnie</span><span>Prime actuelle</span><span>Date d'échéance</span><span>Mode de résiliation</span><span>Tâches</span>
            </TableHead>
            <Rows>
              {OPPS.map(o => (
                <Row key={o.name}>
                  <RiskCell><Ico $s={24} $w={.9}>{I[o.icon]}</Ico>{o.name}</RiskCell>
                  {o.uncovered ? <Uncovered>Risque non couvert</Uncovered> : (
                    <>
                      <div>{o.co}</div>
                      <Prime>{o.prime}</Prime>
                      <DateCell>{o.date}</DateCell>
                      <div>{o.mode}</div>
                    </>
                  )}
                  <RowActions>
                    <Ico $s={20} $c="#85888f" $w={1}>{I.comment}</Ico>
                    <ActionSpot $ml={5}><Ico $s={20} $c="#2c9a43" $w={1}>{I.bell}</Ico></ActionSpot>
                    <ActionSpot $ml={14}><Ico $s={20} $c="#5f6590" $w={1}>{I.dots}</Ico></ActionSpot>
                    <ActionSpot $ml={14}><Ico $s={16} $w={1.2}>{I.chevDown}</Ico></ActionSpot>
                  </RowActions>
                </Row>
              ))}
            </Rows>
          </CenterPanel>

          <RightColumn>
            <RightPanel>
              <NoteTabs>
                <NoteTab $on $w={44} $pl={9}><Ico $s={28} $c="#a6b4fb" $w={.9}>{I.note}</Ico></NoteTab>
                <NoteTab $w={50} $pl={12}><Ico $s={20} $h={26} $vb="2 1 20 23" $c="#63666c" $w={1.3}>{I.clip}</Ico></NoteTab>
              </NoteTabs>
              <NoteInput>Nouvelle note client</NoteInput>
              <NoteHead $mt={18}><NoteAvatar>PC</NoteAvatar>jeudi 23 mai 2024</NoteHead>
              <Bubble>
                <div>
                  A exprimé un intérêt pour la<br />
                  planification financière à long terme<br />
                  et la sécurisation de ses revenus<br />
                  post-retraite. Une discussion plus<br />
                  approfondie sur les options de<br />
                  retraite disponibles pourrait être<br />
                  bénéfique pour mieux répondre à<br />
                  ses besoins futurs
                </div>
              </Bubble>
              <NoteHead $mt={8}><NoteAvatar>PC</NoteAvatar>jeudi 01 juin 2023</NoteHead>
              <Bubble>Dossier sinistre à traiter</Bubble>
              <NoteHead $mt={9}><NoteAvatar>PC</NoteAvatar>mardi 09 mai 2023</NoteHead>
              <Bubble>Validation offre prévoyance ce jour</Bubble>
            </RightPanel>
            <Prescriber><PrescriberBox>Prescripteur ALAIN JANODY</PrescriberBox></Prescriber>
          </RightColumn>
        </Content>
      </Main>

      <Support><SupportMark>?</SupportMark>Support</Support>
    </Page>
  );
}
